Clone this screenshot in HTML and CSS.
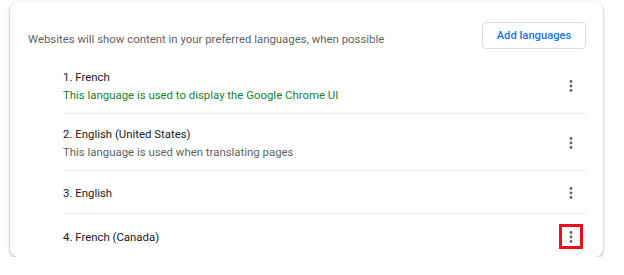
FILE: index.html
```html
<!DOCTYPE html>
<html lang="en">
  <head>
    <meta charset="UTF-8" />
    <meta name="viewport" content="width=device-width, initial-scale=1.0" />
    <title>Languages</title>
    <link rel="stylesheet" href="styles.css">
  </head>
  <body>
    <!-- Languages Card -->
    <div class="card">
      <div class="card-header">
        <p class="intro">Websites will show content in your preferred languages, when possible</p>
        <button class="add-btn">Add languages</button>
      </div>
      <ul class="lang-list">
        <li class="lang-row">
          <div class="lang-text">
            <div class="lang-name">1. French</div>
            <div class="lang-note green">This language is used to display the Google Chrome UI</div>
          </div>
          <span class="more-btn">
            <svg width="4" height="12" viewBox="0 0 4 12"><circle cx="2" cy="1.5" r="1.4"/><circle cx="2" cy="6" r="1.4"/><circle cx="2" cy="10.5" r="1.4"/></svg>
          </span>
        </li>
        <li class="lang-row">
          <div class="lang-text">
            <div class="lang-name">2. English (United States)</div>
            <div class="lang-note">This language is used when translating pages</div>
          </div>
          <span class="more-btn">
            <svg width="4" height="12" viewBox="0 0 4 12"><circle cx="2" cy="1.5" r="1.4"/><circle cx="2" cy="6" r="1.4"/><circle cx="2" cy="10.5" r="1.4"/></svg>
          </span>
        </li>
        <li class="lang-row single">
          <div class="lang-text">
            <div class="lang-name">3. English</div>
          </div>
          <span class="more-btn">
            <svg width="4" height="12" viewBox="0 0 4 12"><circle cx="2" cy="1.5" r="1.4"/><circle cx="2" cy="6" r="1.4"/><circle cx="2" cy="10.5" r="1.4"/></svg>
          </span>
        </li>
        <li class="lang-row single">
          <div class="lang-text">
            <div class="lang-name">4. French (Canada)</div>
          </div>
          <span class="more-btn highlighted">
            <svg width="4" height="12" viewBox="0 0 4 12"><circle cx="2" cy="1.5" r="1.4"/><circle cx="2" cy="6" r="1.4"/><circle cx="2" cy="10.5" r="1.4"/></svg>
          </span>
        </li>
      </ul>
    </div>
  </body>
</html>
```

FILE: styles.css
```css
/* Base Styles */
* {
  margin: 0;
  padding: 0;
  box-sizing: border-box;
  font-family: Roboto, "Liberation Sans", sans-serif;
}

body {
  background: #fff;
  padding: 2px 21px 0 10px;
}

/* Card */
.card {
  width: 593px;
  height: 255px;
  background: #fff;
  border-radius: 8px;
  box-shadow: 0 1px 2px rgba(60, 64, 67, 0.3), 0 1px 3px 1px rgba(60, 64, 67, 0.15);
}

.card-header {
  display: flex;
  justify-content: space-between;
  align-items: flex-start;
  height: 55px;
  padding: 20px 17px 0 18px;
}

.intro {
  font-size: 11.4px;
  line-height: 20px;
  color: #5f6368;
  margin-top: 7px;
}

.add-btn {
  width: 104px;
  height: 27px;
  background: #fff;
  border: 1px solid #dadce0;
  border-radius: 4px;
  color: #1a73e8;
  font-size: 11.2px;
  font-weight: 500;
}

/* Language List */
.lang-list {
  list-style: none;
  margin: 0 17px 0 53px;
}

.lang-row {
  display: flex;
  justify-content: space-between;
  align-items: center;
  height: 57px;
  padding-top: 2px;
  border-bottom: 1px solid #e8eaed;
}

.lang-row.single {
  height: 43px;
}

.lang-row:last-child {
  border-bottom: none;
}

.lang-name {
  font-size: 11.4px;
  line-height: 18px;
  color: #202124;
}

.lang-note {
  font-size: 11.4px;
  line-height: 18px;
  color: #5f6368;
}

.lang-note.green {
  color: #188038;
}

.more-btn {
  display: flex;
  justify-content: center;
  align-items: center;
  width: 24px;
  height: 25px;
  margin-right: 3px;
  fill: #5f6368;
}

.more-btn.highlighted {
  border: 3px solid #e8101f;
}
```
